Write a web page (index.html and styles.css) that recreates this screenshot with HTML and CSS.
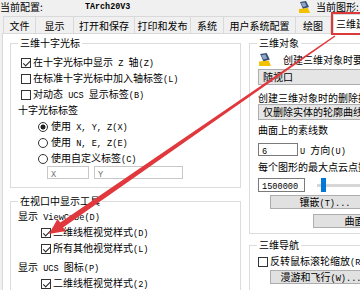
FILE: index.html
```html
<!DOCTYPE html>
<html lang="zh-CN">
<head>
<meta charset="utf-8">
<link rel="stylesheet" href="styles.css">
</head>
<body>
<div class="dlg">
  <div class="info">
    <span class="cfg-l">当前配置:</span>
    <span class="cfg-v">TArch20V3</span>
    <svg class="dwg-ico" width="13" height="13" viewBox="0 0 13 13"><path d="M2 1 L8 0 L11 6 L5 8 Z" fill="#3b4f72"/><path d="M3 2 L7 1.5 L8.5 5 L5 6 Z" fill="#8fa7c9"/><path d="M1 8 L10 7 L12 12 L1 12 Z" fill="#f2c200"/></svg>
    <span class="cur">当前图形:</span>
  </div>
  <div class="tabs">
    <div class="tab">文件</div>
    <div class="tab">显示</div>
    <div class="tab">打开和保存</div>
    <div class="tab">打印和发布</div>
    <div class="tab">系统</div>
    <div class="tab">用户系统配置</div>
    <div class="tab">绘图</div>
    <div class="tab active">三维建模</div>
  </div>
  <div class="panel">
    <div class="col">
      <fieldset class="grp g1">
        <legend>三维十字光标</legend>
        <div class="row cbrow"><span class="cb on"></span>在十字光标中显示<span class="m"> Z </span>轴<span class="m">(Z)</span></div>
        <div class="row cbrow"><span class="cb"></span>在标准十字光标中加入轴标签<span class="m">(L)</span></div>
        <div class="row cbrow"><span class="cb"></span>对动态<span class="m"> UCS </span>显示标签<span class="m">(B)</span></div>
        <div class="row">十字光标标签</div>
        <div class="row rdrow"><span class="rd on"></span>使用<span class="m"> X, Y, Z(X)</span></div>
        <div class="row rdrow"><span class="rd"></span>使用<span class="m"> N, E, Z(E)</span></div>
        <div class="row rdrow"><span class="rd"></span>使用自定义标签<span class="m">(C)</span></div>
        <div class="inputs">
          <div class="tb dis w1"><span class="m">X</span></div>
          <div class="tb dis w2"><span class="m">Y</span></div>
        </div>
      </fieldset>
      <fieldset class="grp g2">
        <legend>在视口中显示工具</legend>
        <div class="row">显示<span class="m"> ViewCube(D)</span></div>
        <div class="row cbrow sub"><span class="cb on"></span>二维线框视觉样式<span class="m">(D)</span></div>
        <div class="row cbrow sub"><span class="cb on"></span>所有其他视觉样式<span class="m">(L)</span></div>
        <div class="row ucs">显示<span class="m"> UCS </span>图标<span class="m">(P)</span></div>
        <div class="row cbrow sub"><span class="cb on"></span>二维线框视觉样式<span class="m">(2)</span></div>
      </fieldset>
    </div>
    <div class="col">
      <fieldset class="grp g3">
        <legend>三维对象</legend>
        <div class="row icorow"><svg class="obj-ico" width="14" height="14" viewBox="0 0 13 13"><path d="M2 1 L8 0 L11 6 L5 8 Z" fill="#3b4f72"/><path d="M3 2 L7 1.5 L8.5 5 L5 6 Z" fill="#8fa7c9"/><path d="M1 8 L10 7 L12 12 L1 12 Z" fill="#f2c200"/></svg>创建三维对象时要求的视觉样式<span class="m">(T)</span></div>
        <div class="combo c1">随视口</div>
        <div class="lbl l1">创建三维对象时的删除控制<span class="m">(D)</span></div>
        <div class="combo">仅删除实体的轮廓曲线和路径曲线</div>
        <div class="lbl l2">曲面上的素线数</div>
        <div class="urow">
          <div class="tb w3"><span class="m">6</span></div>
          <span><span class="m">U </span>方向<span class="m">(U)</span></span>
        </div>
        <div class="lbl l2">每个图形的最大点云点数</div>
        <div class="prow">
          <div class="tb w4"><span class="m">1500000</span></div>
          <div class="slider"><span class="thumb"></span></div>
        </div>
        <div class="btn b1">镶嵌<span class="m">(T)...</span></div>
        <div class="btn b2">曲面分析<span class="m">(A)...</span></div>
      </fieldset>
      <fieldset class="grp g4">
        <legend>三维导航</legend>
        <div class="row cbrow nav"><span class="cb"></span>反转鼠标滚轮缩放<span class="m">(R)</span></div>
        <div class="btn b3">漫游和飞行<span class="m">(W)...</span></div>
      </fieldset>
    </div>
  </div>
  <svg class="arrow" width="360" height="290" viewBox="0 0 360 290">
    <polygon points="49,234 57.5,219 60.3,222.6 334.6,35.4 335.4,36.6 63,227.4 66,231" fill="#e0383c"/>
  </svg>
</div>
</body>
</html>
```

FILE: styles.css
```css
html, body {
  margin: 0;
  padding: 0;
}
body {
  width: 360px;
  height: 290px;
  overflow: hidden;
  background: #f0f0f0;
  font-family: "Noto Sans CJK SC", sans-serif;
  font-size: 10px;
  color: #000;
}
.m {
  font-family: "Liberation Mono", monospace;
  font-size: 8.6px;
  white-space: pre;
}
.dlg {
  position: relative;
  width: 480px;
  height: 290px;
}
.info {
  display: flex;
  align-items: center;
  height: 14px;
  line-height: 14px;
  white-space: nowrap;
}
.cfg-l { width: 85px; }
.cfg-v { width: 213px; font-family: "Liberation Mono", monospace; font-size: 8.4px; font-weight: bold; }
.dwg-ico { margin-right: 5px; flex: none; }
.tabs {
  display: flex;
  align-items: flex-end;
  height: 19px;
  padding-left: 3px;
  white-space: nowrap;
}
.tab {
  height: 17px;
  line-height: 17px;
  text-align: center;
  box-sizing: border-box;
  border: 1px solid #d9d9d9;
  border-bottom: none;
  margin-right: -1px;
  background: #f0f0f0;
}
.tab:nth-child(1) { width: 33px; }
.tab:nth-child(2) { width: 39px; }
.tab:nth-child(3) { width: 62px; }
.tab:nth-child(4) { width: 57px; }
.tab:nth-child(5) { width: 34px; }
.tab:nth-child(6) { width: 73px; }
.tab:nth-child(7) { width: 36px; }
.tab.active {
  width: 70px;
  height: 19px;
  line-height: 18px;
  text-align: left;
  padding-left: 2px;
  background: #fff;
  outline: 2px solid #dc3b3b;
  margin-left: 3px;
  position: relative;
}
.panel {
  display: grid;
  grid-template-columns: 231px 230px;
  column-gap: 8px;
  align-items: start;
  padding: 3px 0 0 7px;
  margin-left: 2px;
  height: 260px;
  background: #fff;
  border-top: 1px solid #d9d9d9;
  border-left: 1px solid #d9d9d9;
  box-sizing: border-box;
}
.col {
  display: flex;
  flex-direction: column;
}
.grp {
  margin: 0;
  padding: 5px 7px 8px 7px;
  border: 1px solid #dcdcdc;
  min-width: 0;
  white-space: nowrap;
}
.grp legend {
  padding: 0 2px;
  line-height: 12px;
  height: 12px;
}
.row {
  height: 16px;
  line-height: 16px;
  white-space: nowrap;
}
.cb {
  position: relative;
  display: inline-block;
  width: 10px;
  height: 10px;
  box-sizing: border-box;
  border: 1px solid #333;
  background: #fff;
  margin-right: 2px;
  vertical-align: -1.5px;
}
.cb.on::after {
  content: "";
  position: absolute;
  left: 2.5px;
  top: 0;
  width: 2.5px;
  height: 5.5px;
  border: solid #222;
  border-width: 0 1.3px 1.3px 0;
  transform: rotate(45deg);
}
.cbrow { padding-left: 3px; }
.cbrow.sub { padding-left: 23px; }
.rd {
  display: inline-block;
  width: 10px;
  height: 10px;
  box-sizing: border-box;
  border: 1px solid #333;
  border-radius: 50%;
  background: #fff;
  margin-right: 3px;
  vertical-align: -1.5px;
}
.rd.on {
  background: radial-gradient(circle, #222 0 2.2px, #fff 2.8px);
}
.rdrow { padding-left: 20px; }
.inputs {
  display: flex;
  gap: 5px;
  padding-left: 29px;
}
.tb {
  height: 13px;
  line-height: 11px;
  box-sizing: border-box;
  border: 1px solid #7a7a7a;
  background: #fff;
  padding-left: 3px;
}
.tb.dis {
  border-color: #c8c8c8;
  color: #6d6d6d;
}
.w1 { width: 42px; }
.w2 { width: 89px; }
.w3 { width: 40px; margin-right: 2px; }
.w4 { width: 47px; height: 14px; line-height: 12px; }
.g2 { margin-top: 7px; padding-top: 1px; }
.ucs { margin-top: 3px; }
.g3 { padding-top: 3px; padding-bottom: 5px; }
.icorow { padding-left: 1px; }
.obj-ico { margin-right: 11px; vertical-align: -3px; }
.combo {
  height: 16px;
  line-height: 14px;
  box-sizing: border-box;
  border: 1px solid #adadad;
  background: #e5e5e5;
  padding-left: 4px;
  margin-left: 1px;
  width: 215px;
  overflow: hidden;
  white-space: nowrap;
}
.c1 { margin-top: 1px; }
.lbl {
  line-height: 13px;
  height: 13px;
  padding-left: 1px;
}
.l1 { margin-top: 6px; }
.l2 { margin-top: 3px; }
.urow {
  display: flex;
  align-items: center;
  margin-top: 6px;
  padding-left: 1px;
}
.prow {
  display: flex;
  align-items: center;
  margin-top: 5px;
  padding-left: 1px;
}
.slider {
  width: 100px;
  height: 14px;
  margin-left: 12px;
  display: flex;
  align-items: center;
  background: linear-gradient(#d6d6d6, #d6d6d6) center / 100% 3px no-repeat;
}
.thumb {
  width: 5px;
  height: 14px;
  margin-left: 4px;
  background: #0078d7;
}
.btn {
  height: 14px;
  line-height: 12px;
  box-sizing: border-box;
  border: 1px solid #adadad;
  background: #e1e1e1;
  text-align: center;
}
.b1 { margin: 3px 0 0 13px; width: 110px; }
.b2 { margin: 5px 0 0 56px; width: 134px; }
.g4 { margin-top: 5px; padding-top: 2px; }
.nav { padding-left: 1px; }
.b3 { margin: 1px 0 0 13px; width: 102px; }
.arrow {
  position: absolute;
  left: 0;
  top: 0;
  pointer-events: none;
}
```
